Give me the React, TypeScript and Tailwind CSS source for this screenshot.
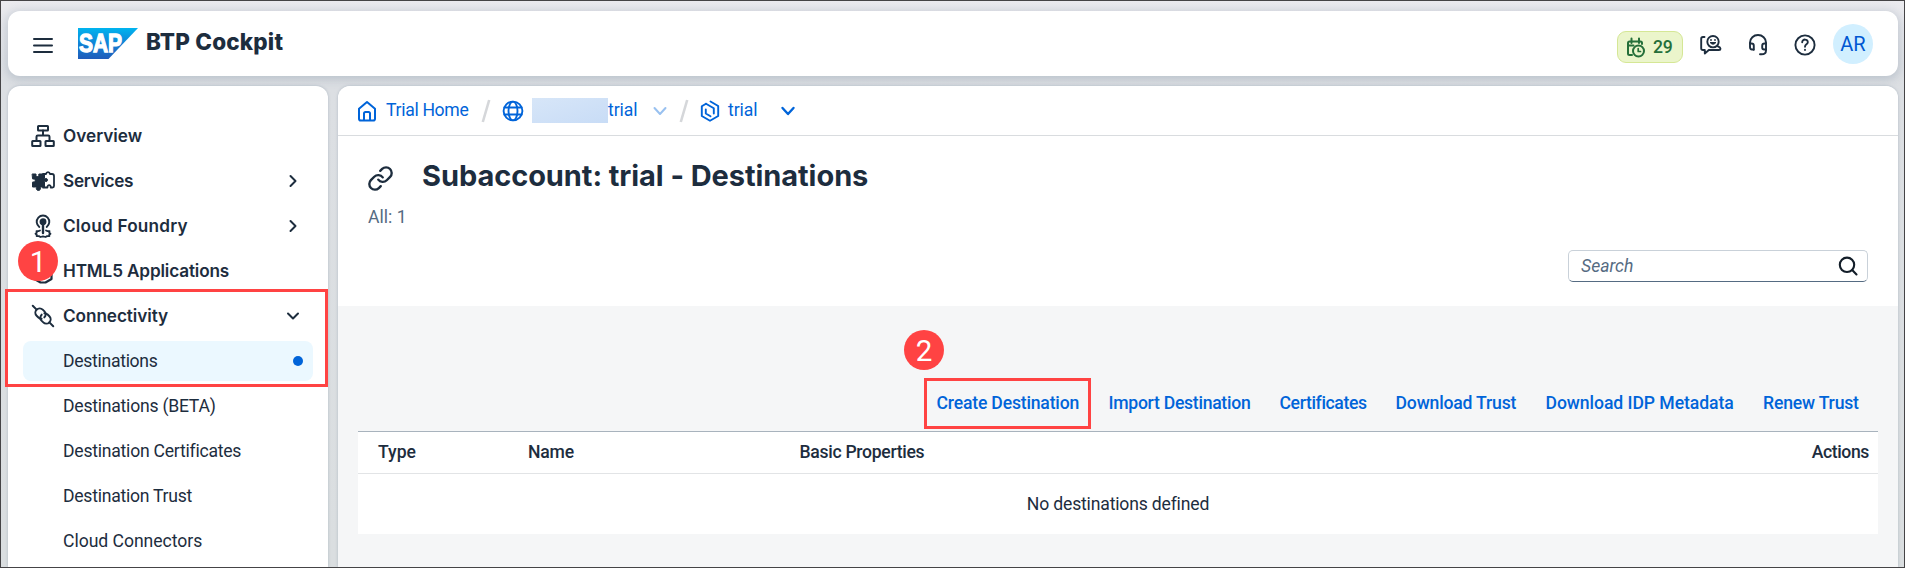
import type { ReactNode } from 'react';

const ROBOTO = "font-['Roboto','Liberation_Sans',sans-serif]";
const INTER = "font-['Inter','Liberation_Sans',sans-serif]";

type IconProps = { children: ReactNode; w: number; h: number; className?: string; sw?: number };

function Icon({ children, w, h, className = '', sw = 2 }: IconProps) {
  return (
    <svg width={w} height={h} viewBox={`0 0 ${w} ${h}`} fill="none" stroke="currentColor" strokeWidth={sw}
      strokeLinecap="round" strokeLinejoin="round" className={`shrink-0 ${className}`}>
      {children}
    </svg>
  );
}

function OverviewIcon() {
  return (
    <Icon w={24} h={24} sw={2}>
      <rect x="7" y="2" width="10" height="4.5" rx=".5" />
      <path d="M12 6.5v5M5.5 17v-4.2q0-1.3 1.3-1.3h10.4q1.3 0 1.3 1.3V17" />
      <rect x="1.2" y="17" width="8.3" height="5" rx=".5" />
      <rect x="14.5" y="17" width="8.3" height="5" rx=".5" />
    </Icon>
  );
}

function ServicesIcon() {
  return (
    <Icon w={24} h={24} sw={1.8}>
      <path fill="currentColor" strokeWidth="1" d="M1.5 5h3.2c.4 0 .6.4.4.8-.5 1.2.4 1.7 1.3 1.7s1.8-.5 1.3-1.7c-.2-.4 0-.8.4-.8h5.4v4.2c0 .4.4.6.8.4 1.4-.6 2.2.3 2.2 1.4s-.8 2-2.2 1.4c-.4-.2-.8 0-.8.4v5.2H10c-.5 0-.8.4-.6.8.4 1.3-.4 2.7-2 2.7s-2.4-1.4-2-2.7c.2-.4-.1-.8-.6-.8H1.500v-4.600c0-.4.3-.6.7-.5 1.300.4 2-.4 2-1.400s-.7-1.800-2-1.400c-.4.1-.7-.1-.7-.5z" />
      <path d="M12 5h3c.5-2.600 3.500-2.600 4 0h2q2 0 2 2v10q0 1.500-1.500 1.500h-1.800c.5-3.200-3.700-3.200-3.200 0H12" />
    </Icon>
  );
}

function CloudFoundryIcon() {
  return (
    <Icon w={24} h={24} sw={1.9}>
      <path d="M8.300 12.900A6.300 6.300 0 1 1 15.700 12.900" />
      <circle cx="12" cy="7.800" r="2.500" fill="currentColor" />
      <path d="M12 9v10" strokeWidth="2.400" />
      <path d="M9 16.500l-1.500.6-2 .1.300 1.500-1.300 1 1.300 1-.2 1.300 2.300.1 1.600.9 2.500-.7 2.500.7 1.600-.9 2.300-.1-.2-1.300 1.300-1-1.300-1 .3-1.500-2-.1-1.500-.6" strokeWidth="1.800" />
    </Icon>
  );
}

function Html5Icon() {
  return (
    <Icon w={24} h={26} sw={2.2}>
      <path d="M3.500 2h17v19l-6 3.500h-5L3.500 21z" />
    </Icon>
  );
}

function ConnectivityIcon() {
  return (
    <Icon w={24} h={24} sw={2}>
      <g transform="rotate(45 12 12)">
        <path d="M-2.500 12h5.500M21 12h5.500" />
        <path d="M13 15a4.600 4.600 0 0 1-3.200 1.300H7.300a4.300 4.300 0 0 1 0-8.600h2.500a4.200 4.200 0 0 1 4.100 4.300" />
        <path d="M11 9a4.600 4.600 0 0 1 3.200-1.300h2.500a4.300 4.300 0 0 1 0 8.600h-2.500a4.200 4.200 0 0 1-4.100-4.300" />
      </g>
    </Icon>
  );
}

type NavProps = { label: string; icon?: ReactNode; text?: string; arrow?: 'right' | 'down'; selected?: boolean };

function NavItem({ label, icon, text = '', arrow, selected }: NavProps) {
  return (
    <li className={`flex h-10 items-center rounded-lg ${selected ? 'bg-[#ebf8ff]' : ''}`}>
      <span className="flex w-10 shrink-0 pl-2">{icon}</span>
      <span className={`flex-1 whitespace-nowrap ${icon ? `${INTER} text-[17.2px] font-semibold` : `${ROBOTO} text-[17.6px]`} ${text}`}>{label}</span>
      {arrow === 'right' && <Icon w={12} h={14} className="mr-[14px]"><path d="M3.500 2l5 5-5 5" /></Icon>}
      {arrow === 'down' && <Icon w={14} h={14} className="mr-[13px]"><path d="M2 4.500l5 5 5-5" /></Icon>}
      {selected && <span className="mr-[10px] size-[10px] rounded-full bg-[#0064d9]" />}
    </li>
  );
}

function SapLogo() {
  return (
    <svg width="60" height="31" viewBox="0 0 60 31" className="ml-[24px] mt-[17px] shrink-0">
      <defs>
        <linearGradient id="sap" x1="0" y1="0" x2="0" y2="1">
          <stop offset="0" stopColor="#00b4ef" />
          <stop offset=".5" stopColor="#1183d6" />
          <stop offset="1" stopColor="#1f5cba" />
        </linearGradient>
      </defs>
      <path d="M0 0h60L30.500 31H0z" fill="url(#sap)" />
      <text x="1" y="24" textLength="43" lengthAdjust="spacingAndGlyphs" fontFamily="Liberation Sans, Arial, sans-serif"
        fontWeight="700" fontSize="25" fill="#fff" stroke="#fff" strokeWidth="1.300">SAP</text>
    </svg>
  );
}

function Header() {
  return (
    <header className="flex h-[65px] shrink-0 items-start rounded-xl bg-white shadow-[0_2px_10px_2px_rgba(91,115,139,0.26)]">
      <Icon w={22} h={18} className="ml-[24px] mt-[25px]">
        <path d="M2 3h18M2 9.500h18M2 16h18" strokeWidth="2" />
      </Icon>
      <SapLogo />
      <h1 className={`ml-[8px] mt-[17px] whitespace-nowrap text-[22.500px] leading-[28px] font-extrabold tracking-[0.180px] ${INTER}`}>BTP Cockpit</h1>
      <div className="ml-auto flex items-start">
        <div className="mt-5 flex h-8 w-[66px] items-center rounded-[9px] border border-[#d5e795] bg-[#ebf5cb] pl-[8px] text-[#256f3a]">
          <Icon w={20} h={21} sw={2} className="mt-px">
            <path d="M6 18H3.500Q2 18 2 16.500V6q0-1.500 1.500-1.500h11Q16 4.500 16 6v1M5.500 1.500v4.500M13 1.500v4.500M2 8.500h5.500" />
            <circle cx="12.500" cy="14" r="5.500" />
            <path d="M12.200 11.500v3h2.300" strokeWidth="1.700" />
          </Icon>
          <span className={`ml-[7px] text-[17.600px] font-medium tracking-[-0.200px] ${ROBOTO}`}>29</span>
        </div>
        <Icon w={24} h={24} className="ml-[16px] mt-[22px]" sw={1.900}>
          <path d="M5.500 4H4Q2.200 4 2.200 5.800v9.400Q2.200 17 4 17h1.800v3.600L9.800 17H20q1.500 0 1.500-1.300 0-1.200-3-2.500" />
          <circle cx="14" cy="8.700" r="5.700" />
          <path d="M11.300 9.800q2.700 3 5.400 0z" fill="currentColor" strokeWidth="1" />
          <path d="M12 7v.1M16 7v.1" strokeWidth="1.800" />
        </Icon>
        <Icon w={24} h={24} className="ml-[23px] mt-[22px]" sw={1.900}>
          <path d="M7.500 16.500H6Q4 16.500 4 14V9.500a8 7.500 0 0 1 16 0v8q0 3.800-4.500 3.800H14" />
          <path d="M4 10.500h1.500q2.300 0 2.300 2.300v4M20 10.500h-1.500q-2.300 0-2.300 2.300v1.700q0 2 2 2H20" />
        </Icon>
        <Icon w={24} h={24} className="ml-[23px] mt-[22px]" sw={1.900}>
          <circle cx="12" cy="12" r="9.600" />
          <path d="M9.200 9.200c0-3.600 5.800-3.400 5.600 0-.1 2.200-2.800 2-2.800 4.500M12 16.800v.3" />
        </Icon>
        <div className={`ml-[16px] mr-[25px] mt-[13px] flex size-10 items-center justify-center rounded-full bg-[#d1efff] text-[20px] text-[#0057d2] ${ROBOTO}`}>AR</div>
      </div>
    </header>
  );
}

function Sidebar() {
  return (
    <nav className="w-80 shrink-0 rounded-t-xl bg-white px-[15px] pt-[30px] shadow-[0_0_3px_rgba(91,115,139,0.35)]">
      <ul className="flex flex-col gap-[5px]">
        <NavItem label="Overview" icon={<OverviewIcon />} />
        <NavItem label="Services" icon={<ServicesIcon />} text="tracking-[-0.300px]" arrow="right" />
        <NavItem label="Cloud Foundry" icon={<CloudFoundryIcon />} text="tracking-[0.200px]" arrow="right" />
        <NavItem label="HTML5 Applications" icon={<Html5Icon />} text="tracking-[-0.150px]" />
        <NavItem label="Connectivity" icon={<ConnectivityIcon />} text="tracking-[-0.080px]" arrow="down" />
        <NavItem label="Destinations" text="tracking-[-0.300px]" selected />
        <NavItem label="Destinations (BETA)" text="tracking-[-0.240px]" />
        <NavItem label="Destination Certificates" text="tracking-[-0.240px]" />
        <NavItem label="Destination Trust" text="tracking-[-0.260px]" />
        <NavItem label="Cloud Connectors" text="tracking-[-0.040px]" />
      </ul>
    </nav>
  );
}

function Slash({ className }: { className: string }) {
  return (
    <svg width="10" height="24" viewBox="0 0 10 24" className={`shrink-0 ${className}`}>
      <path d="M1.800 23L8.200 1" stroke="#d5d7da" strokeWidth="2.600" />
    </svg>
  );
}

function Breadcrumbs() {
  return (
    <div className={`flex h-[50px] shrink-0 items-center border-b border-[#d9dcdf] pl-[19px] text-[17.600px] text-[#0064d9] ${ROBOTO}`}>
      <Icon w={20} h={22} sw={2}>
        <path d="M2 8.700L10 2l8 6.700v10q0 1.800-1.800 1.800H3.800Q2 20.500 2 18.700z" />
        <path d="M7 20v-6.500Q7 12 8.500 12h3q1.500 0 1.500 1.500V20" />
      </Icon>
      <span className="ml-[9px] w-[83px] whitespace-nowrap tracking-[-0.320px]">Trial Home</span>
      <Slash className="ml-[12px]" />
      <Icon w={22} h={22} sw={1.900} className="ml-[10.500px] mt-px">
        <circle cx="11" cy="11" r="9.400" />
        <ellipse cx="11" cy="11" rx="4.500" ry="9.400" />
        <path d="M2.500 7.500h17M2.500 14.500h17" />
      </Icon>
      <span className="-mt-[1px] ml-[8.500px] h-[25px] w-[76px] bg-linear-to-br from-[#d7e6f8] to-[#c8dcf6]" />
      <span className="w-[29px] tracking-[-0.050px]">trial</span>
      <Icon w={16} h={12} sw={2} className="ml-[15px] text-[#99c1f0]"><path d="M2.500 3l5.500 6 5.500-6" /></Icon>
      <Slash className="ml-[11px]" />
      <Icon w={20} h={22} sw={1.900} className="ml-[11px] mt-px">
        <path d="M10.500 1.500L18.200 6v10L10 20.800 1.800 16V6.300L6 3.800" />
        <path d="M6 3.800l7.800 4.500v5.200M5.800 9.500v4l4.700 2.700" />
      </Icon>
      <span className="ml-[8px] w-[29px] tracking-[-0.050px]">trial</span>
      <Icon w={16} h={12} sw={2.400} className="ml-[23px]"><path d="M2.500 3l5.500 6 5.500-6" /></Icon>
    </div>
  );
}

const ACTIONS = [
  { label: 'Create Destination', cls: 'w-[172px] tracking-[-0.180px]' },
  { label: 'Import Destination', cls: 'w-[171px] tracking-[-0.270px]' },
  { label: 'Certificates', cls: 'w-[116px] tracking-[-0.370px]' },
  { label: 'Download Trust', cls: 'w-[150px] tracking-[-0.170px]' },
  { label: 'Download IDP Metadata', cls: 'w-[217.500px] tracking-[-0.060px]' },
  { label: 'Renew Trust', cls: 'w-[96px] tracking-[-0.180px]' },
];

function Marker({ n, className }: { n: number; className: string }) {
  return (
    <span className={`absolute z-10 flex size-10 items-center justify-center rounded-full bg-[#ff4343] pt-[3px] text-[29.500px] leading-none text-white ${ROBOTO} ${className}`}>{n}</span>
  );
}

function Main() {
  return (
    <main className="flex min-w-0 flex-1 flex-col overflow-hidden rounded-t-xl bg-[#f5f6f7] shadow-[0_0_3px_rgba(91,115,139,0.35)]">
      <section className="flex h-[220px] shrink-0 flex-col bg-white">
        <Breadcrumbs />
        <div className="mt-[21px] flex h-[38px] items-center pl-[29px]">
          <svg width="27" height="27" viewBox="0 0 24 24" fill="none" stroke="currentColor" strokeWidth="2.100"
            strokeLinecap="round" strokeLinejoin="round" className="mt-[4px] shrink-0">
            <path d="M10 13a5 5 0 0 0 7.540.540l3-3a5 5 0 0 0-7.070-7.070l-1.720 1.710" />
            <path d="M14 11a5 5 0 0 0-7.540-.540l-3 3a5 5 0 0 0 7.070 7.070l1.710-1.710" />
          </svg>
          <h2 className={`ml-[28px] whitespace-nowrap text-[29px] leading-[38px] font-[650] tracking-[-0.070px] ${INTER}`}>Subaccount: trial - Destinations</h2>
        </div>
        <p className={`ml-[30px] mt-[9px] text-[17.600px] leading-[26px] text-[#556b82] ${ROBOTO}`}>All: 1</p>
        <div className="ml-auto mr-[30px] mt-[20px] flex h-8 w-[300px] shrink-0 items-center rounded-[5px] border border-[#c9d1d9] border-b-[#556b82] pl-[12px] pr-[9px]">
          <span className={`flex-1 text-[17.600px] text-[#556b82] italic ${ROBOTO}`}>Search</span>
          <Icon w={20} h={20} sw={2.100} className="text-[#131e29]">
            <circle cx="9" cy="8.800" r="7.200" />
            <path d="M14.200 14l4.300 4.400" />
          </Icon>
        </div>
      </section>
      <div className={`flex h-[125px] shrink-0 items-end justify-end pb-[13px] pr-[39px] text-[17.600px] font-medium text-[#0064d9] ${ROBOTO}`}>
        {ACTIONS.map((a) => (
          <button key={a.label} className={`shrink-0 text-left leading-[30px] whitespace-nowrap ${a.cls}`}>{a.label}</button>
        ))}
      </div>
      <section className={`mx-5 h-[103px] shrink-0 border-t border-[#a8b3bd] bg-white text-[17.600px] ${ROBOTO}`}>
        <div className="flex h-[42px] items-center border-b border-[#e2e4e6] pl-5 pr-[9px] font-medium">
          <span className="w-[150px]">Type</span>
          <span className="w-[271.500px] tracking-[-0.200px]">Name</span>
          <span className="flex-1 tracking-[-0.300px]">Basic Properties</span>
          <span className="tracking-[-0.400px]">Actions</span>
        </div>
        <div className="flex h-[60px] items-center justify-center tracking-[-0.180px]">No destinations defined</div>
      </section>
    </main>
  );
}

export default function App() {
  return (
    <div className="relative flex h-[568px] w-[1905px] flex-col gap-[10px] overflow-hidden border border-[#454446] bg-linear-to-b from-[#ebebef] via-[#dcdfe3] via-15% to-[#dadee0] px-[7px] pr-[6px] pt-[10px] text-[#1d2d3e]">
      <Header />
      <div className="flex min-h-0 flex-1 gap-[10px]">
        <Sidebar />
        <Main />
      </div>
      <span className="absolute left-[4px] top-[288px] h-[98px] w-[323px] border-3 border-[#ff4343]" />
      <Marker n={1} className="left-[17px] top-[240px]" />
      <span className="absolute left-[923px] top-[377px] h-[51px] w-[167px] border-3 border-[#ff4343]" />
      <Marker n={2} className="left-[903px] top-[329px]" />
    </div>
  );
}
